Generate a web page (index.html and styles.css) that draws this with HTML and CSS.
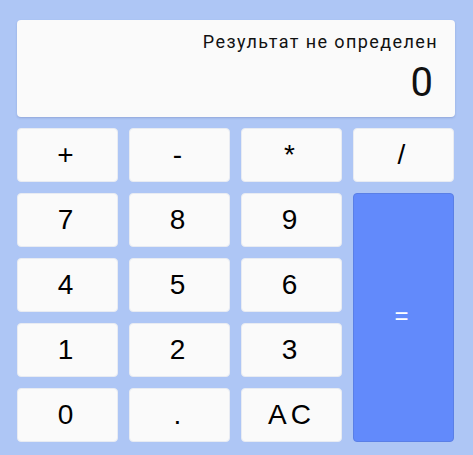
FILE: index.html
```html
<!DOCTYPE html>
<html lang="ru">
<head>
<meta charset="utf-8">
<title>Калькулятор</title>
<link rel="stylesheet" href="styles.css">
</head>
<body>
<div class="calc">
  <div class="display">
    <div class="status">Результат не определен</div>
    <div class="value">0</div>
  </div>
  <div class="keys">
    <button class="key">+</button>
    <button class="key">-</button>
    <button class="key">*</button>
    <button class="key">/</button>
    <button class="key">7</button>
    <button class="key">8</button>
    <button class="key">9</button>
    <button class="key equals">=</button>
    <button class="key">4</button>
    <button class="key">5</button>
    <button class="key">6</button>
    <button class="key">1</button>
    <button class="key">2</button>
    <button class="key">3</button>
    <button class="key">0</button>
    <button class="key">.</button>
    <button class="key">AC</button>
  </div>
</div>
</body>
</html>
```
FILE: styles.css
```css
html, body {
  margin: 0;
  padding: 0;
  background: #aec6f5;
}
.calc {
  width: 438px;
  padding: 20px 0 0 17px;
  display: flex;
  flex-direction: column;
  gap: 11px;
}
.display {
  box-sizing: border-box;
  height: 97px;
  background: #fafafa;
  border-radius: 4px;
  box-shadow: 0 1px 2px rgba(60, 80, 140, 0.25);
  padding: 10px 22px 0 0;
  display: flex;
  flex-direction: column;
  align-items: flex-end;
  font-family: Roboto, "Noto Sans", sans-serif;
  color: #111;
}
.status {
  font-size: 18px;
  letter-spacing: 1.4px;
  line-height: 24px;
  margin-right: -5px;
}
.value {
  font-size: 40px;
  line-height: 48px;
  margin-top: 5px;
}
.keys {
  display: grid;
  grid-template-columns: repeat(4, 101px);
  grid-auto-rows: 54px;
  gap: 11px;
}
.key {
  margin: 0;
  padding: 0;
  border: 1px solid #e8ebf2;
  border-radius: 4px;
  background: #fafafa;
  font-family: "Liberation Sans", Arial, sans-serif;
  font-size: 28px;
  letter-spacing: 4px;
  color: #000;
}
.equals {
  grid-column: 4;
  grid-row: 2 / span 4;
  background: #628afb;
  border-color: #5a7fe6;
  color: #fff;
  font-size: 24px;
  padding-bottom: 4px;
}
```
